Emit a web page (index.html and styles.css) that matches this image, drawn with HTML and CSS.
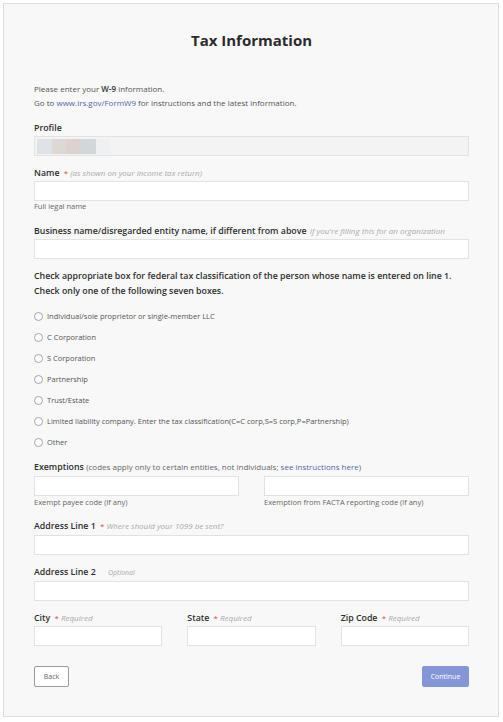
FILE: index.html
```html
<!DOCTYPE html>
<html>
<head>
<meta charset="utf-8">
<link rel="stylesheet" href="styles.css">
</head>
<body>
<div class="card">
  <h1 class="title">Tax Information</h1>
  <div class="intro">
    <p>Please enter your <b>W-9</b> information.</p>
    <p>Go to <a class="link">www.irs.gov/FormW9</a> for instructions and the latest information.</p>
  </div>

  <div class="field profile">
    <div class="label">Profile</div>
    <div class="profile-box">
      <span class="blk b1"></span><span class="blk b2"></span><span class="blk b3"></span><span class="blk b4"></span><span class="blk b5"></span>
    </div>
  </div>

  <div class="field name">
    <div class="label">Name <span class="req">*</span><span class="note">(as shown on your income tax return)</span></div>
    <div class="input"></div>
    <div class="hint">Full legal name</div>
  </div>

  <div class="field business">
    <div class="label">Business name/disregarded entity name, if different from above <span class="note wide">If you're filling this for an organization</span></div>
    <div class="input"></div>
  </div>

  <div class="check-text">
    <p>Check appropriate box for federal tax classification of the person whose name is entered on line 1.</p>
    <p>Check only one of the following seven boxes.</p>
  </div>

  <div class="radios">
    <div class="radio"><span class="circle"></span>Individual/sole proprietor or single-member LLC</div>
    <div class="radio"><span class="circle"></span>C Corporation</div>
    <div class="radio"><span class="circle"></span>S Corporation</div>
    <div class="radio"><span class="circle"></span>Partnership</div>
    <div class="radio"><span class="circle"></span>Trust/Estate</div>
    <div class="radio"><span class="circle"></span>Limited liability company. Enter the tax classification(C=C corp,S=S corp,P=Partnership)</div>
    <div class="radio"><span class="circle"></span>Other</div>
  </div>

  <div class="field exemptions">
    <div class="label">Exemptions <span class="paren">(codes apply only to certain entities, not individuals; <span class="link">see instructions here</span>)</span></div>
    <div class="two-col">
      <div>
        <div class="input"></div>
        <div class="hint">Exempt payee code (if any)</div>
      </div>
      <div>
        <div class="input"></div>
        <div class="hint">Exemption from FACTA reporting code (if any)</div>
      </div>
    </div>
  </div>

  <div class="field addr1">
    <div class="label">Address Line 1 <span class="req">*</span><span class="note">Where should your 1099 be sent?</span></div>
    <div class="input"></div>
  </div>

  <div class="field addr2">
    <div class="label">Address Line 2 <span class="note opt">Optional</span></div>
    <div class="input"></div>
  </div>

  <div class="three-col">
    <div class="field">
      <div class="label">City <span class="req">*</span><span class="note">Required</span></div>
      <div class="input"></div>
    </div>
    <div class="field">
      <div class="label">State <span class="req">*</span><span class="note">Required</span></div>
      <div class="input"></div>
    </div>
    <div class="field">
      <div class="label">Zip Code <span class="req">*</span><span class="note">Required</span></div>
      <div class="input"></div>
    </div>
  </div>

  <div class="actions">
    <button class="btn back">Back</button>
    <button class="btn continue">Continue</button>
  </div>
</div>
</body>
</html>
```

FILE: styles.css
```css
* { box-sizing: border-box; }
html, body { margin: 0; padding: 0; background: #fff; }
body {
  font-family: "Open Sans", "Liberation Sans", sans-serif;
  color: #555;
  padding: 3px 4px 0 3px;
}
.card {
  border: 1px solid #dedede;
  background: #f8f8f8;
  height: 714px;
  padding: 0 29px 0 30px;
}
.title {
  margin: 0;
  padding-top: 25px;
  text-align: center;
  font-size: 15px;
  line-height: 22px;
  font-weight: 700;
  color: #2b2b2b;
}
.intro {
  margin-top: 31px;
  font-size: 8px;
  line-height: 13.5px;
  color: #555;
}
.intro p { margin: 0; }
.intro b { color: #333; font-weight: 600; }
.link { color: #5565a8; }
.field { margin-top: 11px; }
.field.profile { margin-top: 13px; }
.field.business { margin-top: 14px; }
.field.addr1 { margin-top: 13.5px; }
.label {
  font-size: 8.8px;
  line-height: 12px;
  font-weight: 600;
  color: #2e2e2e;
  margin-bottom: 2px;
  white-space: nowrap;
}
.addr1 .label { margin-bottom: 2.5px; }
.req { color: #d9534f; font-weight: 400; margin-left: 2px; font-size: 8px; }
.note {
  font-style: italic;
  font-weight: 400;
  color: #aaa;
  font-size: 8px;
  margin-left: 2px;
}
.note.wide { margin-left: 1px; }
.note.opt { margin-left: 10px; font-size: 7px; }
.paren { font-weight: 400; font-size: 8px; color: #666; }
.profile-box {
  height: 20px;
  border: 1px solid #e3e3e3;
  background: #f3f3f3;
  display: flex;
  padding: 2px 0 0 2px;
}
.blk { display: block; width: 15px; height: 15px; }
.b1 { background: #dfe3e7; width: 15px; }
.b2 { background: #ddd8d5; width: 14px; }
.b3 { background: #dcd3d1; width: 15px; }
.b4 { background: #d2d8da; width: 15px; }
.b5 { background: #eef0f2; width: 14px; }
.input {
  height: 20px;
  border: 1px solid #e2e2e2;
  background: #fff;
}
.hint {
  font-size: 7.5px;
  line-height: 10px;
  color: #666;
}
.exemptions .hint { margin-top: 1px; }
.check-text {
  margin-top: 9.5px;
  font-size: 8.8px;
  line-height: 15px;
  font-weight: 600;
  color: #2e2e2e;
}
.check-text p { margin: 0; white-space: nowrap; }
.radios { margin-top: 7px; }
.radio {
  height: 21px;
  display: flex;
  align-items: center;
  font-size: 7.5px;
  color: #555;
  white-space: nowrap;
}
.circle {
  width: 9px;
  height: 9px;
  border: 1px solid #a5a5a5;
  border-radius: 50%;
  background: #fff;
  margin-right: 4px;
  flex: none;
}
.field.exemptions { margin-top: 8px; }
.exemptions .label { margin-bottom: 3px; }
.two-col {
  display: grid;
  grid-template-columns: 1fr 1fr;
  column-gap: 25px;
}
.three-col {
  margin-top: 11.5px;
  display: grid;
  grid-template-columns: 1fr 1fr 1fr;
  column-gap: 25px;
}
.three-col .field { margin-top: 0; }
.actions {
  margin-top: 20px;
  display: flex;
  justify-content: space-between;
}
.btn {
  font-family: "Open Sans", "Liberation Sans", sans-serif;
  font-size: 7px;
  height: 21px;
  border-radius: 2px;
  padding: 0;
  cursor: pointer;
}
.back {
  width: 35px;
  background: #fff;
  border: 1px solid #9a9a9a;
  color: #666;
}
.continue {
  width: 47px;
  background: #8596d8;
  border: 1px solid #8596d8;
  color: #fff;
}
```
